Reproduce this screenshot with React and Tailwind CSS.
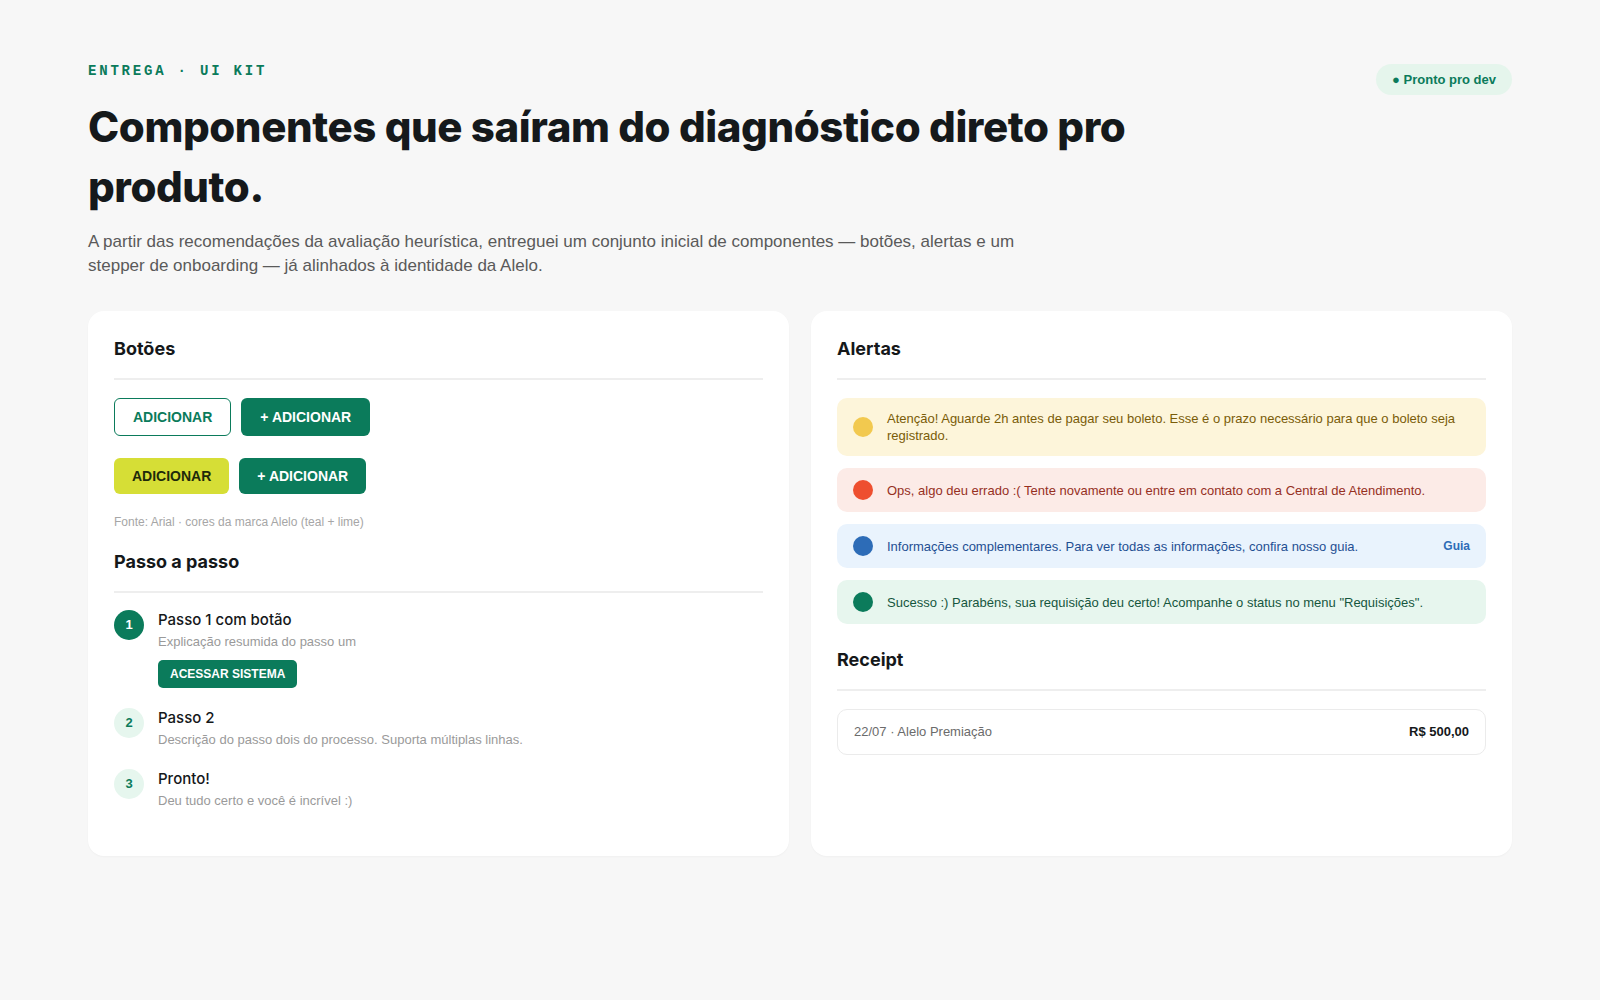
import React from 'react';

const heading = "font-['Inter',sans-serif]";
const body = "font-['Liberation_Sans',Arial,sans-serif]";

const alerts = [
    {
        id: 'warn',
        box: 'bg-[#fdf5da]',
        dot: 'bg-[#f2c94f]',
        text: 'text-[#7a5c08]',
        msg: 'Atenção! Aguarde 2h antes de pagar seu boleto. Esse é o prazo necessário para que o boleto seja registrado.'
    },
    {
        id: 'error',
        box: 'bg-[#fcebe7]',
        dot: 'bg-[#ee4f2f]',
        text: 'text-[#96301f]',
        msg: 'Ops, algo deu errado :( Tente novamente ou entre em contato com a Central de Atendimento.'
    },
    {
        id: 'info',
        box: 'bg-[#e9f3fd]',
        dot: 'bg-[#2d6cb7]',
        text: 'text-[#1f4f93]',
        msg: 'Informações complementares. Para ver todas as informações, confira nosso guia.',
        action: 'Guia'
    },
    {
        id: 'ok',
        box: 'bg-[#e7f6ee]',
        dot: 'bg-[#0b7b5b]',
        text: 'text-[#16563e]',
        msg: 'Sucesso :) Parabéns, sua requisição deu certo! Acompanhe o status no menu "Requisições".'
    }
];

const steps = [
    { n: 1, title: 'Passo 1 com botão', desc: 'Explicação resumida do passo um', active: true },
    { n: 2, title: 'Passo 2', desc: 'Descrição do passo dois do processo. Suporta múltiplas linhas.' },
    { n: 3, title: 'Pronto!', desc: 'Deu tudo certo e você é incrível :)' }
];

const SectionTitle = ({ children, className = '' }) => (
    <h2 className={`${heading} text-[18px] leading-[24px] font-bold text-[#15181a] pb-[17px] border-b-2 border-[#eeeeee] ${className}`}>
        {children}
    </h2>
);

const App = () => {
    return (
        <div className={`min-h-screen bg-[#f7f7f7] ${body}`}>
            <div className="px-[88px] pt-[61px] pb-20">
                <header className="flex justify-between items-start">
                    <div>
                        <p className="font-['Liberation_Mono',monospace] font-bold text-[14px] leading-[20px] tracking-[0.2em] text-[#0b7b5b]">
                            ENTREGA · UI KIT
                        </p>
                        <h1 className={`${heading} mt-4 max-w-[1100px] text-[42px] leading-[60px] font-extrabold tracking-[-0.01em] text-[#15191b]`}>
                            Componentes que saíram do diagnóstico direto pro produto.
                        </h1>
                        <p className="mt-[13px] max-w-[960px] text-[17px] leading-[24px] text-[#5a5a5a]">
                            A partir das recomendações da avaliação heurística, entreguei um conjunto inicial de componentes — botões, alertas e um stepper de onboarding — já alinhados à identidade da Alelo.
                        </p>
                    </div>
                    <span className="mt-[3px] shrink-0 rounded-full bg-[#e5f5ec] px-4 py-[7px] text-[13px] leading-[17px] font-bold text-[#0b7b5b]">
                        ● Pronto pro dev
                    </span>
                </header>

                <div className="mt-[33px] grid grid-cols-2 gap-[22px]">
                    {/* botões + stepper */}
                    <section className="bg-white rounded-[16px] p-[26px] shadow-[0_1px_2px_rgba(0,0,0,0.03)]">
                        <SectionTitle>Botões</SectionTitle>
                        <div className="mt-[18px] flex gap-[10px]">
                            <button className="rounded-[6px] border border-[#0b7b5b] bg-white px-[18px] py-[10px] text-[14px] leading-[16px] font-bold text-[#0b7b5b]">
                                ADICIONAR
                            </button>
                            <button className="rounded-[6px] bg-[#0b7b5b] px-[19px] py-[11px] text-[14px] leading-[16px] font-bold text-white">
                                + ADICIONAR
                            </button>
                        </div>
                        <div className="mt-[22px] flex gap-[10px]">
                            <button className="rounded-[6px] bg-[#d6de36] px-[18px] py-[10px] text-[14px] leading-[16px] font-bold text-[#1f2a0a]">
                                ADICIONAR
                            </button>
                            <button className="rounded-[6px] bg-[#0b7b5b] px-[18px] py-[10px] text-[14px] leading-[16px] font-bold text-white">
                                + ADICIONAR
                            </button>
                        </div>
                        <p className="mt-5 text-[12px] leading-[16px] text-[#a6a6a6]">
                            Fonte: Arial · cores da marca Alelo (teal + lime)
                        </p>

                        <SectionTitle className="mt-5">Passo a passo</SectionTitle>
                        <ol className="mt-[17px] mb-5 flex flex-col gap-5">
                            {steps.map((s) => (
                                <li key={s.n} className="flex gap-[14px]">
                                    <span className={`flex h-[30px] w-[30px] shrink-0 items-center justify-center rounded-full text-[13px] font-bold ${s.active ? 'bg-[#0b7b5b] text-white' : 'bg-[#e6f6ee] text-[#0b7b5b]'}`}>
                                        {s.n}
                                    </span>
                                    <div>
                                        <h3 className={`${heading} text-[15px] leading-[20px] font-medium text-[#15181a]`}>{s.title}</h3>
                                        <p className="mt-[3px] text-[13px] leading-[18px] text-[#9a9a9a]">{s.desc}</p>
                                        {s.active && (
                                            <button className="mt-[9px] rounded-[5px] bg-[#0b7b5b] px-3 py-[6px] text-[12px] leading-[16px] font-bold text-white">
                                                ACESSAR SISTEMA
                                            </button>
                                        )}
                                    </div>
                                </li>
                            ))}
                        </ol>
                    </section>

                    {/* alertas + recibo */}
                    <section className="bg-white rounded-[16px] p-[26px] shadow-[0_1px_2px_rgba(0,0,0,0.03)]">
                        <SectionTitle>Alertas</SectionTitle>
                        <div className="mt-[18px] flex flex-col gap-3">
                            {alerts.map((a) => (
                                <div key={a.id} className={`flex items-center gap-[14px] rounded-[10px] px-4 py-[12px] ${a.box}`}>
                                    <span className={`h-5 w-5 shrink-0 rounded-full ${a.dot}`} />
                                    <p className={`flex-1 text-[13px] leading-[17px] ${a.text}`}>{a.msg}</p>
                                    {a.action && (
                                        <span className="text-[12px] leading-[17px] font-bold text-[#2d6cb7]">{a.action}</span>
                                    )}
                                </div>
                            ))}
                        </div>

                        <SectionTitle className="mt-[24px]">Receipt</SectionTitle>
                        <div className="mt-[18px] flex items-center justify-between rounded-[10px] border border-[#ebebeb] px-4 py-[13px] text-[13px] leading-[18px]">
                            <span className="text-[#6b6b6b]">22/07 · Alelo Premiação</span>
                            <span className="font-bold text-[#15181a]">R$ 500,00</span>
                        </div>
                    </section>
                </div>
            </div>
        </div>
    );
};

export default App;
